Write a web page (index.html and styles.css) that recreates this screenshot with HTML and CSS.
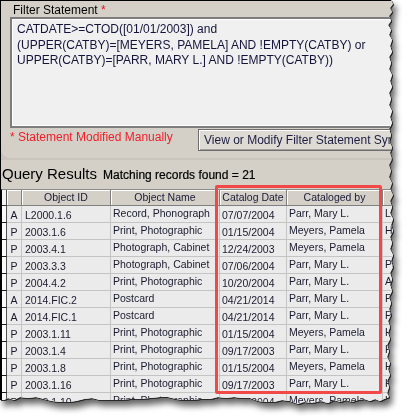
FILE: index.html
```html
<!DOCTYPE html>
<html>
<head>
<meta charset="utf-8">
<link rel="stylesheet" href="styles.css">
</head>
<body>
<div class="frame">
  <div class="sheet">
    <div class="filter-panel">
      <div class="label">Filter Statement <span class="req">*</span></div>
      <div class="statement">CATDATE&gt;=CTOD([01/01/2003]) and<br>(UPPER(CATBY)=[MEYERS, PAMELA] AND !EMPTY(CATBY) or<br>UPPER(CATBY)=[PARR, MARY L.] AND !EMPTY(CATBY))</div>
      <div class="below">
        <div class="modified">* Statement Modified Manually</div>
        <div class="btn">View or Modify Filter Statement Syntax</div>
      </div>
    </div>
    <div class="results-head">
      <span class="title">Query Results</span>
      <span class="count">Matching records found = 21</span>
    </div>
    <table class="grid">
      <colgroup>
        <col class="w-sel"><col class="w-flag"><col class="w-id"><col class="w-name"><col class="w-date"><col class="w-by"><col class="w-extra">
      </colgroup>
      <thead>
        <tr>
          <th class="sel"><div class="c"></div></th>
          <th><div class="c"></div></th>
          <th><div class="c">Object ID</div></th>
          <th><div class="c">Object Name</div></th>
          <th><div class="c">Catalog Date</div></th>
          <th><div class="c">Cataloged by</div></th>
          <th><div class="c"></div></th>
        </tr>
      </thead>
      <tbody>
        <tr><td class="sel"><div class="c"></div></td><td><div class="c lo flag">A</div></td><td><div class="c lo id">L2000.1.6</div></td><td><div class="c">Record, Phonograph</div></td><td><div class="c lo">07/07/2004</div></td><td><div class="c">Parr, Mary L.</div></td><td><div class="c">Lo</div></td></tr>
        <tr><td class="sel"><div class="c"></div></td><td><div class="c lo flag">P</div></td><td><div class="c lo id">2003.1.6</div></td><td><div class="c">Print, Photographic</div></td><td><div class="c lo">01/15/2004</div></td><td><div class="c">Meyers, Pamela</div></td><td><div class="c">Ha</div></td></tr>
        <tr><td class="sel"><div class="c"></div></td><td><div class="c lo flag">P</div></td><td><div class="c lo id">2003.4.1</div></td><td><div class="c">Photograph, Cabinet</div></td><td><div class="c lo">12/24/2003</div></td><td><div class="c">Meyers, Pamela</div></td><td><div class="c"></div></td></tr>
        <tr><td class="sel"><div class="c"></div></td><td><div class="c lo flag">P</div></td><td><div class="c lo id">2003.3.3</div></td><td><div class="c">Photograph, Cabinet</div></td><td><div class="c lo">07/06/2004</div></td><td><div class="c">Parr, Mary L.</div></td><td><div class="c">Pa</div></td></tr>
        <tr><td class="sel"><div class="c"></div></td><td><div class="c lo flag">P</div></td><td><div class="c lo id">2004.4.2</div></td><td><div class="c">Print, Photographic</div></td><td><div class="c lo">10/20/2004</div></td><td><div class="c">Parr, Mary L.</div></td><td><div class="c">Al</div></td></tr>
        <tr><td class="sel"><div class="c"></div></td><td><div class="c lo flag">A</div></td><td><div class="c lo id">2014.FIC.2</div></td><td><div class="c">Postcard</div></td><td><div class="c lo">04/21/2014</div></td><td><div class="c">Parr, Mary L.</div></td><td><div class="c">Pa</div></td></tr>
        <tr><td class="sel"><div class="c"></div></td><td><div class="c lo flag">A</div></td><td><div class="c lo id">2014.FIC.1</div></td><td><div class="c">Postcard</div></td><td><div class="c lo">04/21/2014</div></td><td><div class="c">Parr, Mary L.</div></td><td><div class="c">Pa</div></td></tr>
        <tr><td class="sel"><div class="c"></div></td><td><div class="c lo flag">P</div></td><td><div class="c lo id">2003.1.11</div></td><td><div class="c">Print, Photographic</div></td><td><div class="c lo">01/15/2004</div></td><td><div class="c">Meyers, Pamela</div></td><td><div class="c">Ha</div></td></tr>
        <tr><td class="sel"><div class="c"></div></td><td><div class="c lo flag">P</div></td><td><div class="c lo id">2003.1.4</div></td><td><div class="c">Print, Photographic</div></td><td><div class="c lo">09/17/2003</div></td><td><div class="c">Parr, Mary L.</div></td><td><div class="c">Ha</div></td></tr>
        <tr><td class="sel"><div class="c"></div></td><td><div class="c lo flag">P</div></td><td><div class="c lo id">2003.1.8</div></td><td><div class="c">Print, Photographic</div></td><td><div class="c lo">01/15/2004</div></td><td><div class="c">Meyers, Pamela</div></td><td><div class="c">Ha</div></td></tr>
        <tr><td class="sel"><div class="c"></div></td><td><div class="c lo flag">P</div></td><td><div class="c lo id">2003.1.16</div></td><td><div class="c">Print, Photographic</div></td><td><div class="c lo">09/17/2003</div></td><td><div class="c">Parr, Mary L.</div></td><td><div class="c">Ha</div></td></tr>
        <tr><td class="sel"><div class="c"></div></td><td><div class="c lo flag">P</div></td><td><div class="c lo id">2003.1.10</div></td><td><div class="c">Print, Photographic</div></td><td><div class="c lo">01/15/2004</div></td><td><div class="c">Meyers, Pamela</div></td><td><div class="c">Ha</div></td></tr>
      </tbody>
    </table>
    <div class="highlight"></div>
  </div>
</div>
</body>
</html>
```

FILE: styles.css
```css
html, body {
  margin: 0;
  padding: 0;
  background: #ffffff;
}

.frame {
  width: 411px;
  height: 418px;
  filter: drop-shadow(1px 1px 0 #2a2a2a) drop-shadow(3px 5px 3px rgba(0, 0, 0, 0.6));
}

.sheet {
  position: relative;
  width: 400px;
  height: 408px;
  box-sizing: border-box;
  border-left: 1px solid #000;
  border-top: 1px solid #000;
  background: #c9c5bd;
  overflow: hidden;
  font-family: "Liberation Sans", Arial, sans-serif;
  clip-path: polygon(0 0, 391px 0, 393px 4px, 390px 8px, 392px 12px, 389px 16px, 391px 21px, 388px 25px, 391px 30px, 389px 35px, 392px 40px, 390px 46px, 392px 52px, 389px 57px, 391px 63px, 389px 69px, 392px 75px, 390px 81px, 392px 87px, 389px 93px, 391px 99px, 389px 105px, 392px 111px, 390px 117px, 392px 123px, 389px 129px, 391px 135px, 389px 141px, 392px 147px, 390px 153px, 392px 159px, 389px 165px, 391px 171px, 389px 177px, 392px 183px, 390px 189px, 393px 195px, 390px 201px, 392px 207px, 390px 213px, 393px 219px, 391px 225px, 393px 231px, 390px 237px, 392px 243px, 390px 249px, 393px 255px, 391px 261px, 393px 267px, 390px 273px, 392px 279px, 390px 285px, 392px 291px, 389px 297px, 391px 303px, 389px 309px, 391px 315px, 388px 321px, 390px 327px, 388px 333px, 390px 339px, 387px 345px, 389px 351px, 387px 357px, 390px 363px, 388px 369px, 390px 375px, 387px 381px, 389px 387px, 387px 393px, 389px 397px, 384px 399px, 380px 401px, 375px 399px, 370px 401px, 364px 399px, 358px 400px, 352px 402px, 346px 400px, 340px 402px, 334px 400px, 328px 403px, 320px 401px, 312px 403px, 304px 402px, 298px 404px, 290px 401px, 282px 400px, 274px 402px, 266px 402px, 258px 401px, 250px 398px, 242px 398px, 234px 397px, 226px 398px, 218px 397px, 210px 399px, 200px 399px, 192px 400px, 184px 400px, 176px 399px, 168px 397px, 160px 397px, 150px 398px, 140px 399px, 130px 399px, 120px 400px, 110px 400px, 100px 400px, 92px 398px, 84px 399px, 76px 401px, 68px 402px, 60px 402px, 52px 401px, 44px 399px, 36px 397px, 28px 398px, 20px 397px, 14px 400px, 8px 398px, 4px 400px, 0 400px);
}

/* ---------- filter panel ---------- */
.filter-panel {
  height: 157px;
  background: #d4d0c8;
  border-bottom-left-radius: 9px;
}

.label {
  padding: 2px 0 0 12px;
  font-size: 12px;
  line-height: 14px;
  color: #000;
}

.req {
  color: #e8141c;
}

.statement {
  margin-left: 9px;
  width: 400px;
  height: 111px;
  box-sizing: border-box;
  border: 2px solid #7d7d7d;
  box-shadow: inset 1px 1px 0 #ffffff, inset -1px -1px 0 #ffffff;
  background: #f0f0f0;
  padding: 3px 5px;
  font-size: 12px;
  line-height: 15.6px;
  color: #14143a;
  white-space: nowrap;
}

.below {
  display: flex;
  align-items: flex-start;
}

.modified {
  flex: none;
  width: 197px;
  padding: 2px 0 0 9px;
  box-sizing: border-box;
  font-size: 12px;
  line-height: 14px;
  color: #f01e28;
  white-space: nowrap;
}

.btn {
  flex: none;
  margin-top: 1px;
  height: 22px;
  box-sizing: border-box;
  padding: 3px 6px 0 5px;
  background: #dedbd5;
  border: 1px solid #6e6e6e;
  box-shadow: inset 1px 1px 0 #ffffff, inset -1px -1px 0 #a0a0a0;
  font-size: 12px;
  line-height: 14px;
  color: #1c1c40;
  white-space: nowrap;
}

/* ---------- results header ---------- */
.results-head {
  display: flex;
  align-items: baseline;
  gap: 6px;
  margin-top: 2px;
  padding: 5px 0 5px 1px;
  background: #d4d0c8;
  line-height: 18px;
  white-space: nowrap;
}

.title {
  font-size: 15px;
  color: #000;
}

.count {
  font-size: 12px;
  color: #000;
  -webkit-text-stroke: 0.2px #000;
}

/* ---------- grid ---------- */
.grid {
  border-collapse: separate;
  border-spacing: 0;
  table-layout: fixed;
  width: 442px;
  border-left: 1px solid #000;
  border-top: 1px solid #8a8a8a;
  background: #d4d0c8;
  font-size: 10.5px;
}

.w-sel { width: 5px; }
.w-flag { width: 15px; }
.w-id { width: 89px; }
.w-name { width: 109px; }
.w-date { width: 67px; }
.w-by { width: 96px; }
.w-extra { width: 61px; }

.grid th,
.grid td {
  padding: 0;
}

.grid th {
  background: #d4d0c8;
  border-right: 1px solid #808080;
  border-bottom: 1px solid #808080;
  box-shadow: inset 1px 1px 0 #ffffff;
  font-weight: normal;
  color: #1a1a38;
}

.grid th .c {
  height: 15px;
  line-height: 15px;
  text-align: center;
  padding: 0;
}

.grid th.sel {
  background: #f4f4f4;
  box-shadow: none;
  border-right: 1px solid #505050;
  border-bottom: 1px solid #303030;
}

.grid td {
  background: #ebebeb;
  border-right: 1px solid #c4c4c4;
  border-bottom: 1px solid #c4c4c4;
  color: #1a1a2e;
}

.grid td.sel {
  background: #fafafa;
  border-right: 1px solid #505050;
  border-bottom: 1px solid #1a1a1a;
}

.c {
  height: 16px;
  box-sizing: border-box;
  overflow: hidden;
  white-space: nowrap;
  line-height: 14px;
  padding: 0 0 0 2px;
}

.c.lo {
  padding-top: 2px;
}

.c.id {
  padding-left: 3px;
}

.c.flag {
  padding-left: 0;
  text-align: center;
}

/* ---------- annotation ---------- */
.highlight {
  position: absolute;
  left: 214px;
  top: 184px;
  width: 167px;
  height: 209px;
  box-sizing: border-box;
  border: 3px solid #f24848;
  border-radius: 2px;
}
```
